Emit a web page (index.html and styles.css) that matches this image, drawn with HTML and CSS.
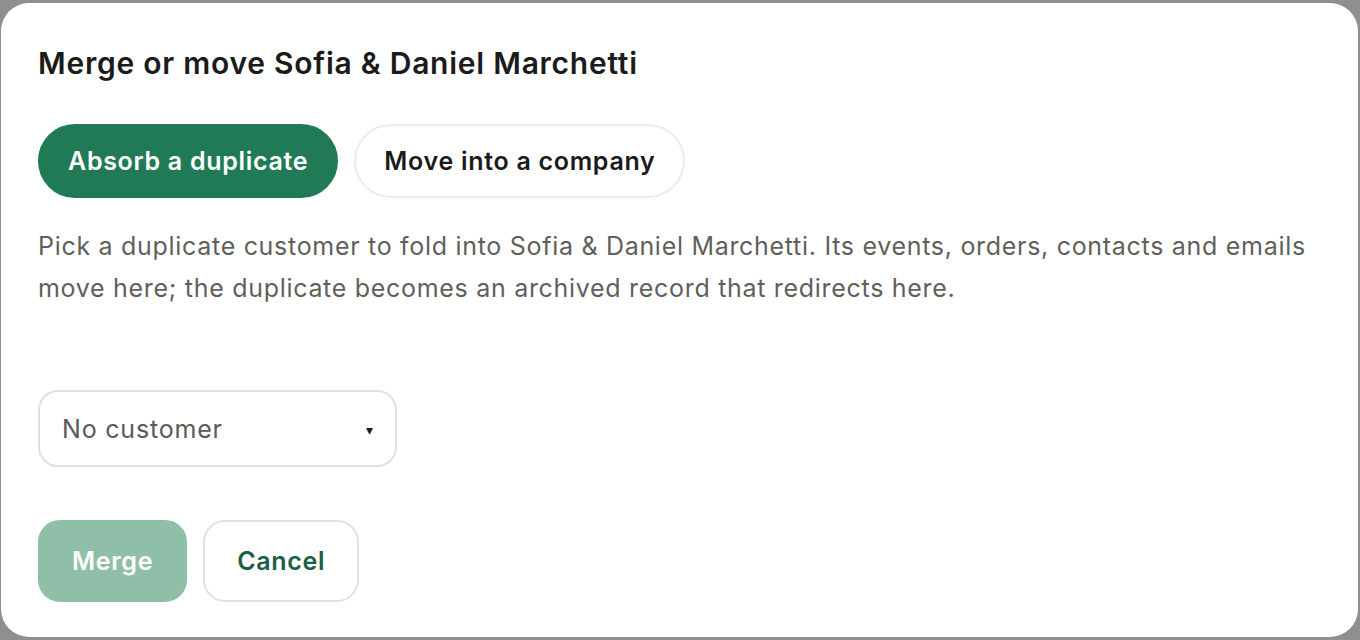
FILE: index.html
```html
<!DOCTYPE html>
<html lang="en">
<head>
    <meta charset="UTF-8">
    <meta name="viewport" content="width=device-width, initial-scale=1.0">
    <title>Merge or move</title>
    <link rel="stylesheet" href="styles.css">
</head>
<body>
    <div class="dialog">
        <h2 class="dialog-title">Merge or move Sofia &amp; Daniel Marchetti</h2>
        <div class="tabs">
            <button class="tab tab-active">Absorb a duplicate</button>
            <button class="tab">Move into a company</button>
        </div>
        <p class="hint">Pick a duplicate customer to fold into Sofia &amp; Daniel Marchetti. Its events, orders, contacts and emails move here; the duplicate becomes an archived record that redirects here.</p>
        <div class="select-wrap">
            <select class="customer-select">
                <option>No customer</option>
            </select>
            <span class="select-arrow">&#9662;</span>
        </div>
        <div class="actions">
            <button class="btn btn-primary" disabled>Merge</button>
            <button class="btn btn-ghost">Cancel</button>
        </div>
    </div>
</body>
</html>
```

FILE: styles.css
```css
html, body {
    height: 100%;
}
body {
    margin: 0;
    padding: 3px 2px 3px 1px;
    box-sizing: border-box;
    background-color: #8f8f8f;
    font-family: Inter, "Noto Sans", sans-serif;
    overflow: hidden;
}
.dialog {
    height: 100%;
    box-sizing: border-box;
    background-color: #fff;
    border-radius: 28px;
    padding: 42px 37px;
}
.dialog-title {
    margin: 0;
    font-size: 30px;
    line-height: 36px;
    font-weight: 600;
    color: #1b1b1b;
    letter-spacing: 0.75px;
}
.tabs {
    display: flex;
    gap: 16px;
    margin-top: 43px;
}
.tab {
    height: 74px;
    padding: 0 28px;
    border-radius: 37px;
    border: 2px solid #ececea;
    background-color: #fff;
    color: #1b1b1b;
    font-family: inherit;
    font-size: 25px;
    letter-spacing: 0.7px;
    font-weight: 600;
    cursor: pointer;
}
.tab-active {
    background-color: #1f7a55;
    border-color: #1f7a55;
    color: #fff;
}
.hint {
    margin: 27px 0 0;
    font-size: 25px;
    letter-spacing: 0.7px;
    line-height: 42px;
    color: #5f5f5b;
}
.select-wrap {
    position: relative;
    width: 359px;
    margin-top: 81px;
}
.customer-select {
    appearance: none;
    -webkit-appearance: none;
    width: 100%;
    height: 77px;
    padding: 0 22px;
    border: 2px solid #e2e1d8;
    border-radius: 20px;
    background-color: #fff;
    color: #5a5a56;
    font-family: inherit;
    font-size: 25px;
    letter-spacing: 0.8px;
}
.select-arrow {
    position: absolute;
    right: 24px;
    top: 50%;
    transform: translateY(-50%);
    font-size: 14px;
    color: #1b1b1b;
    pointer-events: none;
}
.actions {
    display: flex;
    gap: 16px;
    margin-top: 53px;
}
.btn {
    height: 82px;
    padding: 0 32px;
    border-radius: 22px;
    font-family: inherit;
    font-size: 25px;
    letter-spacing: 0.7px;
    font-weight: 600;
    cursor: pointer;
}
.btn-primary {
    background-color: #8fbfa8;
    border: 2px solid #8fbfa8;
    color: #fff;
}
.btn-ghost {
    background-color: #fff;
    border: 2px solid #e2e1d8;
    color: #1c5e43;
}
```
